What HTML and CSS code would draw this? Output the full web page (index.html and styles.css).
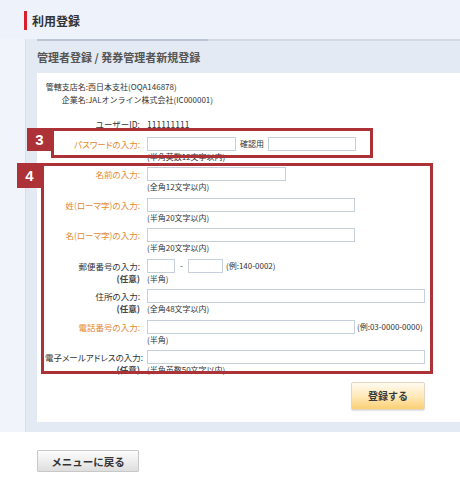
FILE: index.html
```html
<!DOCTYPE html>
<html lang="ja">
<head>
<meta charset="utf-8">
<title>利用登録</title>
<link rel="stylesheet" href="styles.css">
</head>
<body>
<div class="page">
  <div class="title"><span class="bar"></span>利用登録</div>
  <div class="panel">
    <div class="panel-head">管理者登録 / 発券管理者新規登録</div>
    <div class="panel-body">
      <div class="info">
        <span class="k">管轄支店名:</span><span>西日本支社(OQA146878)</span>
        <span class="k">企業名:</span><span>JALオンライン株式会社(IC000001)</span>
      </div>
      <div class="uid">
        <span class="lbl">ユーザーID:</span><span class="val">111111111</span>
      </div>

      <div class="row">
        <span class="lbl req">パスワードの入力:</span>
        <div class="field"><span class="inp w89"></span><span class="conf">確認用</span><span class="inp w88"></span></div>
        <span class="sub"></span>
        <span class="hint">(半角英数12文字以内)</span>
      </div>

      <div class="row">
        <span class="lbl req">名前の入力:</span>
        <div class="field"><span class="inp w139"></span></div>
        <span class="sub"></span>
        <span class="hint">(全角12文字以内)</span>
      </div>

      <div class="row">
        <span class="lbl req">姓(ローマ字)の入力:</span>
        <div class="field"><span class="inp w208"></span></div>
        <span class="sub"></span>
        <span class="hint">(半角20文字以内)</span>
      </div>

      <div class="row">
        <span class="lbl req">名(ローマ字)の入力:</span>
        <div class="field"><span class="inp w208"></span></div>
        <span class="sub"></span>
        <span class="hint">(半角20文字以内)</span>
      </div>

      <div class="row">
        <span class="lbl">郵便番号の入力:</span>
        <div class="field"><span class="inp w28"></span><span class="dash">-</span><span class="inp w35"></span><span class="ex">(例:140-0002)</span></div>
        <span class="sub">(任意)</span>
        <span class="hint">(半角)</span>
      </div>

      <div class="row">
        <span class="lbl">住所の入力:</span>
        <div class="field"><span class="inp wfull"></span></div>
        <span class="sub">(任意)</span>
        <span class="hint">(全角48文字以内)</span>
      </div>

      <div class="row">
        <span class="lbl req">電話番号の入力:</span>
        <div class="field"><span class="inp w208"></span><span class="ex2">(例:03-0000-0000)</span></div>
        <span class="sub"></span>
        <span class="hint">(半角)</span>
      </div>

      <div class="row">
        <span class="lbl">電子メールアドレスの入力:</span>
        <div class="field"><span class="inp wfull"></span></div>
        <span class="sub">(任意)</span>
        <span class="hint">(半角英数50文字以内)</span>
      </div>

      <div class="actions"><button class="btn-submit" type="button">登録する</button></div>
    </div>
  </div>

  <div class="mark box3"></div>
  <div class="badge badge3">3</div>
  <div class="mark box4"></div>
  <div class="badge badge4">4</div>
</div>
<div class="footer"><button class="btn-back" type="button">メニューに戻る</button></div>
</body>
</html>
```

FILE: styles.css
```css
* { box-sizing: border-box; margin: 0; padding: 0; }

body {
  margin: 0;
  width: 460px;
  overflow: hidden;
  background: #ffffff;
  color: #333333;
  font-family: "Noto Sans CJK JP", "Noto Sans", sans-serif;
}

.page {
  position: relative;
  background: #f1f4fa;
}

.title {
  height: 39px;
  display: flex;
  align-items: center;
  padding: 1px 0 0 24px;
  background: #eef2fb;
  font-size: 12px;
  font-weight: bold;
  color: #333333;
}

.title .bar {
  width: 3px;
  height: 19px;
  background: #d7202b;
  margin-right: 5px;
}

.panel {
  margin-left: 25px;
  padding: 0 0 10px 11px;
  border-left: 1px solid #d9e0ea;
  background: #e4eaf4;
}

.panel-head {
  position: relative;
  height: 34px;
  display: flex;
  align-items: center;
  border-top: 2px solid #d3d9e4;
  font-size: 11px;
  font-weight: bold;
  color: #555555;
}

.panel-head::before {
  content: "";
  position: absolute;
  left: 0;
  top: -2px;
  width: 171px;
  height: 2px;
  background: #bcc5d4;
}

.panel-body {
  background: #ffffff;
  padding: 7px 35px 12px 8px;
}

.info {
  display: grid;
  grid-template-columns: 43px 1fr;
  font-size: 8px;
  line-height: 13px;
  color: #333333;
}

.info .k { text-align: right; }

.uid {
  display: grid;
  grid-template-columns: 95px 1fr;
  column-gap: 7px;
  margin-top: 12px;
  font-size: 8.5px;
  line-height: 12px;
}

.lbl {
  text-align: right;
  font-size: 8.5px;
  line-height: 14px;
  white-space: nowrap;
  font-feature-settings: "palt";
}

.uid .lbl { line-height: 12px; font-feature-settings: normal; }

.val { font-size: 8.5px; }

.row {
  display: grid;
  grid-template-columns: 95px 1fr;
  grid-template-rows: 14px 10px;
  column-gap: 7px;
  margin-top: 6.5px;
}

.req { color: #e4892d; }

.field {
  display: flex;
  align-items: center;
  height: 14px;
  font-size: 8px;
}

.inp {
  display: block;
  height: 14px;
  border: 1px solid #c6d0da;
  background: #ffffff;
}

.w28 { width: 28px; }
.w35 { width: 35px; }
.w88 { width: 88px; }
.w89 { width: 89px; }
.w139 { width: 139px; }
.w208 { width: 208px; }
.wfull { width: 278px; }

.conf {
  font-size: 8px;
  margin: 0 4px 0 4px;
}

.dash { margin: 0 5px 0 5px; width: 3px; text-align: center; }
.ex { margin-left: 3px; font-size: 8px; }
.ex2 { margin-left: 2px; font-size: 8px; }

.sub {
  text-align: right;
  font-size: 8.5px;
  line-height: 11px;
  font-weight: bold;
  color: #444444;
}

.hint {
  font-size: 8px;
  line-height: 11px;
  color: #333333;
  white-space: nowrap;
}

.actions {
  display: flex;
  justify-content: flex-end;
  margin-top: 7.5px;
}

.btn-submit {
  width: 74px;
  height: 28px;
  border: 1px solid #e0d7c5;
  border-radius: 2px;
  background: linear-gradient(#fffbf1, #fee7b4 55%, #fbcf74);
  box-shadow: 0 1px 1px rgba(0, 0, 0, 0.12);
  font-family: "Noto Sans CJK JP", sans-serif;
  font-size: 10px;
  font-weight: bold;
  color: #3a3a3a;
}

.footer {
  padding: 15px 0 0 37px;
  background: #ffffff;
}

.btn-back {
  width: 102px;
  height: 22px;
  border: 1px solid #c8c8c8;
  border-radius: 1px;
  background: linear-gradient(#fdfdfd, #dedede);
  font-family: "Noto Sans CJK JP", sans-serif;
  font-size: 10.5px;
  font-weight: bold;
  color: #333333;
}

/* annotation overlays */
.mark {
  position: absolute;
  border: 3px solid #ac3237;
}

.box3 { left: 51px; top: 128px; width: 322px; height: 30px; }
.box4 { left: 41px; top: 163px; width: 392px; height: 211px; }

.badge {
  position: absolute;
  display: flex;
  align-items: center;
  justify-content: center;
  background: #ac3237;
  color: #ffffff;
  font-family: "Liberation Sans", Arial, sans-serif;
  font-size: 15px;
  font-weight: bold;
}

.badge3 { left: 27px; top: 128px; width: 25px; height: 23px; }
.badge4 { left: 17px; top: 163px; width: 25px; height: 25px; }
```
